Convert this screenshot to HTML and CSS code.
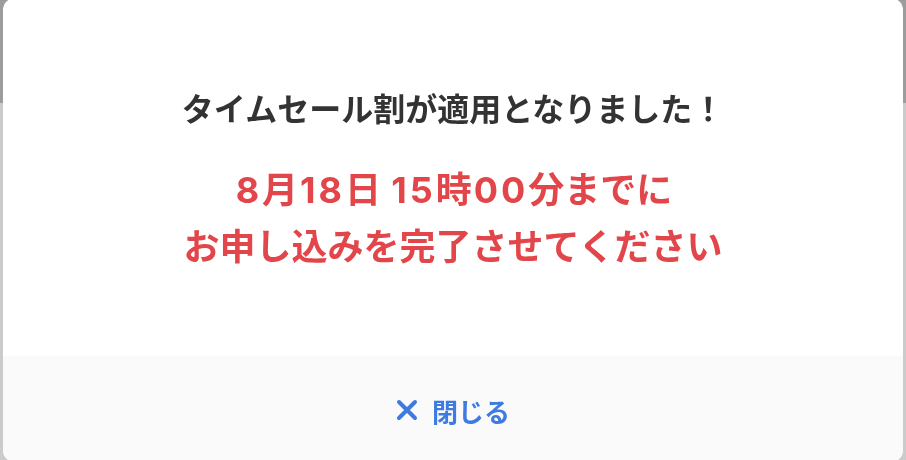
FILE: index.html
```html
<!DOCTYPE html>
<html lang="ja">
<head>
<meta charset="utf-8">
<link rel="stylesheet" href="styles.css">
</head>
<body>
<div class="page">
  <div class="page-header"></div>
  <div class="page-body"></div>
</div>
<div class="modal">
  <div class="modal-content">
    <p class="title">タイムセール割が適用となりました！</p>
    <p class="notice"><span class="num">8</span>月<span class="num">18</span>日 <span class="num">15</span>時<span class="num">00</span>分までに<br>お申し込みを完了させてください</p>
  </div>
  <div class="modal-footer">
    <button class="close-btn" type="button">
      <svg class="close-icon" width="22" height="22" viewBox="0 0 22 22" aria-hidden="true">
        <path d="M3 3 L19 19 M19 3 L3 19" stroke="#3d7be0" stroke-width="4" stroke-linecap="round" fill="none"/>
      </svg>
      <span>閉じる</span>
    </button>
  </div>
</div>
</body>
</html>
```

FILE: styles.css
```css
html, body {
  margin: 0;
  padding: 0;
  height: 100%;
}
body {
  font-family: "Noto Sans CJK JP", "Noto Sans", sans-serif;
  overflow: hidden;
}
.page {
  display: flex;
  flex-direction: column;
  height: 100%;
}
.page-header {
  height: 103px;
  background: #9c9c9c;
}
.page-body {
  flex: 1;
  background: #cbcbcb;
}
.modal {
  position: fixed;
  left: 3px;
  right: 3px;
  top: -2px;
  bottom: -2px;
  background: #ffffff;
  border-radius: 12px;
  display: flex;
  flex-direction: column;
  overflow: hidden;
}
.modal-content {
  height: 358px;
  box-sizing: border-box;
  padding-top: 85px;
  text-align: center;
}
.title {
  margin: 0;
  font-size: 32px;
  font-weight: 700;
  line-height: 48px;
  color: #333333;
}
.notice {
  margin: 29px 0 0;
  font-size: 36px;
  font-weight: 700;
  line-height: 54px;
  color: #e2464a;
}
.num {
  font-family: "Inter", "Noto Sans", sans-serif;
  font-weight: 700;
  letter-spacing: 3px;
  margin-left: 2px;
}
.modal-footer {
  flex: 1;
  background: #fafafa;
  display: flex;
  align-items: center;
  justify-content: center;
}
.close-btn {
  display: flex;
  align-items: center;
  gap: 14px;
  background: none;
  border: 0;
  padding: 0;
  margin-top: 2px;
  font-family: inherit;
  font-size: 26px;
  font-weight: 700;
  color: #3d7be0;
  cursor: pointer;
}
.close-icon {
  display: block;
}
```
